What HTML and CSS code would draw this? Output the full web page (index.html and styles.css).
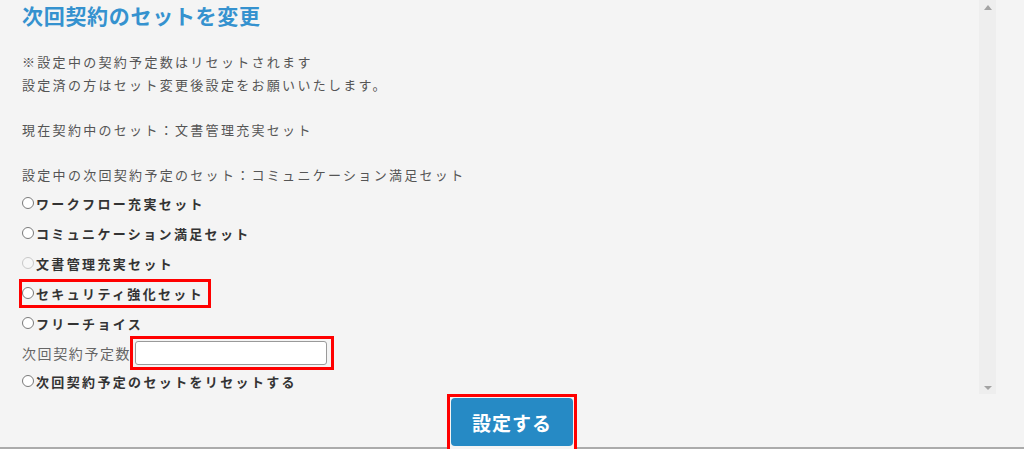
FILE: index.html
```html
<!DOCTYPE html>
<html lang="ja">
<head>
<meta charset="utf-8">
<title>次回契約のセットを変更</title>
<link rel="stylesheet" href="styles.css">
</head>
<body>
<div class="page">
  <div class="main">
    <div class="content">
      <h1 class="title">次回契約のセットを変更</h1>
      <div class="notes">
        <p>※設定中の契約予定数はリセットされます<br>設定済の方はセット変更後設定をお願いいたします。</p>
        <p class="gap">現在契約中のセット：文書管理充実セット</p>
        <p class="gap">設定中の次回契約予定のセット：コミュニケーション満足セット</p>
      </div>
      <div class="options">
        <div class="option"><span class="radio"></span>ワークフロー充実セット</div>
        <div class="option"><span class="radio"></span>コミュニケーション満足セット</div>
        <div class="option"><span class="radio disabled"></span>文書管理充実セット</div>
        <div class="option"><span class="highlight"><span class="radio"></span>セキュリティ強化セット</span></div>
        <div class="option"><span class="radio"></span>フリーチョイス</div>
        <div class="count-row"><span class="count-label">次回契約予定数</span><span class="input-box"><input class="count-input" type="text"></span></div>
        <div class="option last"><span class="radio"></span>次回契約予定のセットをリセットする</div>
      </div>
    </div>
    <div class="scrollbar"><span class="arrow-up"></span><span class="arrow-down"></span></div>
    <div class="rest"></div>
  </div>
  <div class="footer">
    <span class="btn-frame"><button class="submit" type="button">設定する</button></span>
  </div>
</div>
</body>
</html>
```
FILE: styles.css
```css
html, body {
  margin: 0;
  padding: 0;
  background: #ffffff;
}
body {
  font-family: "Noto Sans CJK JP", "Noto Sans", sans-serif;
}
.page {
  width: 1024px;
  background: #f4f4f4;
}
.main {
  display: flex;
  height: 394px;
}
.content {
  flex: 0 0 979px;
  box-sizing: border-box;
  padding-left: 22px;
}
.title {
  margin: 0;
  font-size: 21px;
  line-height: 30px;
  font-weight: 700;
  letter-spacing: 0.7px;
  color: #3592cf;
}
.notes {
  margin-top: 21px;
}
.notes p {
  margin: 0;
  font-size: 13px;
  line-height: 22.5px;
  letter-spacing: 2.3px;
  color: #555555;
}
.notes p.gap {
  margin-top: 22.5px;
}
.options {
  margin-top: 2px;
}
.option {
  display: flex;
  align-items: center;
  height: 30px;
  font-size: 13px;
  font-weight: 700;
  letter-spacing: 2.35px;
  color: #333333;
}
.option.last {
  height: 26px;
}
.radio {
  flex: 0 0 auto;
  box-sizing: border-box;
  width: 12px;
  height: 12px;
  border: 1px solid #7a7a7a;
  border-radius: 50%;
  background: #ffffff;
  margin-right: 2px;
}
.radio.disabled {
  border-color: #c9c9c9;
  background: #f7f7f7;
}
.highlight {
  display: inline-flex;
  align-items: center;
  height: 29px;
  box-sizing: border-box;
  border: 3px solid #ff0000;
  margin-left: -3px;
  padding-right: 4px;
}
.count-row {
  display: flex;
  align-items: center;
  height: 30px;
}
.count-label {
  font-size: 14px;
  letter-spacing: 1.6px;
  color: #666666;
}
.input-box {
  display: inline-flex;
  border: 3px solid #ff0000;
  padding: 2px 4px 2px 2px;
  margin-left: -1px;
}
.count-input {
  box-sizing: border-box;
  width: 192px;
  height: 24px;
  margin: 0;
  border: 1px solid #9a9a9a;
  border-radius: 3px;
  background: #ffffff;
  padding: 0 4px;
}
.scrollbar {
  flex: 0 0 17px;
  background: #eeeeee;
  display: flex;
  flex-direction: column;
  justify-content: space-between;
  align-items: center;
  padding: 5px 0 4px;
  box-sizing: border-box;
}
.arrow-up {
  width: 0;
  height: 0;
  border-left: 4px solid transparent;
  border-right: 4px solid transparent;
  border-bottom: 5px solid #a3a3a3;
}
.arrow-down {
  width: 0;
  height: 0;
  border-left: 4px solid transparent;
  border-right: 4px solid transparent;
  border-top: 4px solid #a3a3a3;
}
.rest {
  flex: 1;
}
.footer {
  display: flex;
  justify-content: center;
  height: 53px;
  border-bottom: 2px solid #ababab;
}
.btn-frame {
  display: block;
  flex: 0 0 auto;
  border: 3px solid #ff0000;
  padding: 1px;
  height: 50px;
  position: relative;
  z-index: 1;
  background: #f4f4f4;
}
.submit {
  display: block;
  width: 122px;
  height: 48px;
  margin: 0;
  border: none;
  border-radius: 4px;
  background: #268ac5;
  color: #ffffff;
  font-family: "Noto Sans CJK JP", "Noto Sans", sans-serif;
  font-size: 19px;
  font-weight: 700;
  letter-spacing: 1px;
}
```
